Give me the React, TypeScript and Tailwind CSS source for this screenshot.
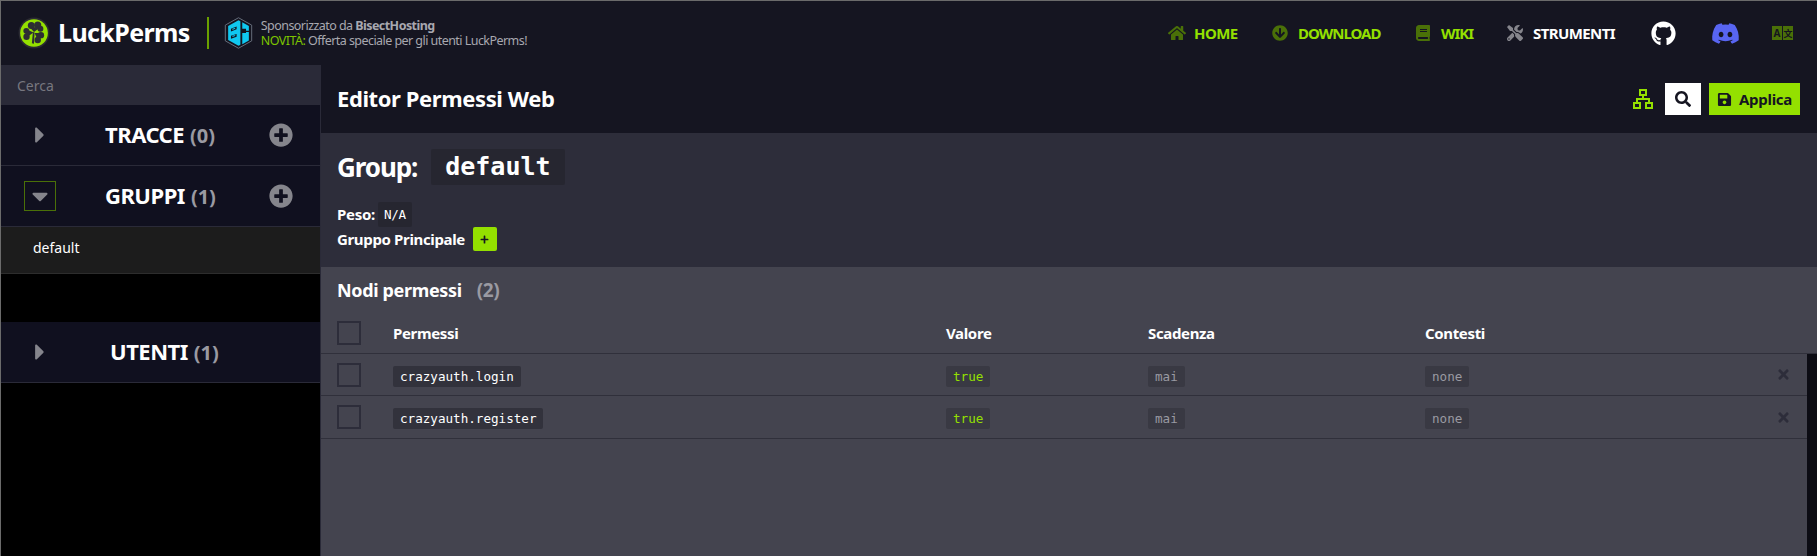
import { FaHome, FaArrowCircleDown, FaBook, FaTools, FaGithub, FaDiscord, FaSearch, FaSave, FaPlusCircle, FaCaretRight, FaCaretDown, FaTimes, FaPlus } from "react-icons/fa";

const sans = "font-['Noto_Sans','Open_Sans',sans-serif]";
const mono = "font-['DejaVu_Sans_Mono','Liberation_Mono',monospace]";

function Clover() {
  return (
    <svg width="32" height="32" viewBox="0 0 30 30" aria-hidden="true">
      <circle cx="15" cy="15" r="14.500" fill="#2b2b33" />
      <circle cx="15" cy="15" r="13" fill="#94e000" />
      <g fill="#2d2d33">
        <circle cx="12.500" cy="8" r="3.300" />
        <circle cx="18.500" cy="7.500" r="3.300" />
        <circle cx="21" cy="11" r="2.800" />
        <path d="M15 14 11 9.500 21 9.500Z" />
        <circle cx="7.800" cy="13" r="2.800" />
        <circle cx="8" cy="18.500" r="3" />
        <path d="M14.500 14.500 7 11 7 20Z" />
        <circle cx="21.500" cy="17" r="3" />
        <circle cx="18.500" cy="21.500" r="3" />
        <path d="M15.500 15 23 15 19.500 24Z" />
        <path d="M14 14 15.500 14.500 15 25 13 24.500Z" />
      </g>
    </svg>
  );
}

function BisectLogo() {
  return (
    <svg width="29" height="32" viewBox="0 0 30 34" aria-hidden="true">
      <path d="M15 .8 29 8.600v16.800L15 33.200 1 25.400V8.600Z" fill="#14141f" stroke="#6b7280" strokeWidth="1" />
      <path d="M4 9.500 15 3.500l2 1v25l-2 1-11-6Z" fill="#10c8f0" />
      <path d="M19 5.500 26 9.500v5h-3v-2h-4Z M19 17h4v-1h3v9l-7 4Z" fill="#10c8f0" />
      <path d="M7 12.500 13 10v3l-6 2.500Z M7 20 13 18v3l-6 2Z" fill="#14141f" />
      <path d="M8.500 12.500 11.500 11.300v1.200l-3 1.200Z M8.500 20 11.500 19v1.200l-3 1Z" fill="#10c8f0" />
    </svg>
  );
}

function NetworkIcon() {
  return (
    <svg width="20" height="20" viewBox="0 0 20 20" fill="none" stroke="#94e000" strokeWidth="2" aria-hidden="true">
      <rect x="7" y="1" width="6" height="5" />
      <rect x="1" y="14" width="6" height="5" />
      <rect x="13" y="14" width="6" height="5" />
      <path d="M10 6v4M4 14v-4h12v4" />
    </svg>
  );
}

function TranslateIcon() {
  return (
    <div className={`flex gap-px text-[10px] font-bold leading-none text-[#14141f] ${sans}`}>
      <span className="flex h-[14px] w-[10px] items-center justify-center bg-[#4a7008]">A</span>
      <span className="flex h-[14px] w-[10px] items-center justify-center bg-[#4a7008] font-['Noto_Sans_CJK_SC',sans-serif] text-[9px]">文</span>
    </div>
  );
}

function NavItem({ icon, label, white, tight, width }: { icon: React.ReactNode; label: string; white?: boolean; tight?: boolean; width: string }) {
  return (
    <div className={`flex items-center ${width}`}>
      <span className="flex w-[26px] shrink-0 items-center">{icon}</span>
      <span className={`text-[15px] font-bold ${tight ? "tracking-[-1px]" : "tracking-[-0.6px]"} ${white ? "text-white" : "text-[#94e000]"}`}>{label}</span>
    </div>
  );
}

function SideRow({ label, count, open, add, pl }: { label: string; count: number; open?: boolean; add?: boolean; pl: string }) {
  return (
    <div className="flex h-[61px] shrink-0 items-center border-b border-[#2a2a38] bg-[#10101f]">
      <div className="flex w-[23px] shrink-0" />
      <div className={`flex h-[30px] w-[32px] shrink-0 items-center justify-center text-[#85858c] ${open ? "border border-[#4a7008]" : ""}`}>
        {open ? <FaCaretDown size={26} /> : <FaCaretRight size={26} />}
      </div>
      <div className={`flex-1 whitespace-nowrap pb-[2px] ${pl}`}>
        <span className="text-[22px] font-bold tracking-[-0.5px] text-white">{label}</span>
        <span className="ml-[6px] text-[20px] font-bold text-[#9a9aa2]">({count})</span>
      </div>
      {add && (
        <div className="mr-[27px] text-[#85858c]">
          <FaPlusCircle size={24} />
        </div>
      )}
    </div>
  );
}

function Checkbox() {
  return <div className="h-[24px] w-[24px] shrink-0 border-2 border-[#2d2d3a]" />;
}

function Chip({ children, color }: { children: React.ReactNode; color: string }) {
  return <span className={`rounded-[2px] bg-[#393943] px-[7px] py-[3px] text-[12.6px] leading-[18px] ${mono} ${color}`}>{children}</span>;
}

function PermRow({ name, height }: { name: string; height: string }) {
  return (
    <div className={`flex items-center border-b border-[#30303b] pl-[16px] pr-[10px] ${height}`}>
      <Checkbox />
      <div className="ml-[32px] w-[553px] shrink-0">
        <span className={`rounded-[2px] bg-[#32323c] px-[7px] py-[3px] text-[12.6px] leading-[18px] text-white ${mono}`}>{name}</span>
      </div>
      <div className="w-[202px] shrink-0"><Chip color="text-[#94e000]">true</Chip></div>
      <div className="w-[277px] shrink-0"><Chip color="text-[#9a9aa2]">mai</Chip></div>
      <div className="flex-1"><Chip color="text-[#9a9aa2]">none</Chip></div>
      <div className="mr-[16px] text-[#2d2d3a]"><FaTimes size={15} /></div>
    </div>
  );
}

export default function App() {
  return (
    <div className={`flex h-[556px] w-[1817px] flex-col overflow-hidden border-l border-t border-[#6b6b6b] bg-black ${sans}`}>
      <header className="flex h-[64px] shrink-0 items-center bg-[#151521] pl-[17px]">
        <Clover />
        <span className="ml-[8px] text-[25px] font-bold tracking-[-0.6px] text-white">LuckPerms</span>
        <div className="ml-[17px] h-[32px] w-[2px] bg-[#6aa000]" />
        <div className="ml-[15px]"><BisectLogo /></div>
        <div className="ml-[8px] text-[12.5px] leading-[15px] tracking-[-0.55px] text-[#a8a8b0]">
          <div>Sponsorizzato da <b>BisectHosting</b></div>
          <div><span className="text-[#7cc400]">NOVITÀ:</span> Offerta speciale per gli utenti LuckPerms!</div>
        </div>
        <nav className="ml-auto flex items-center pr-[24px]">
          <NavItem width="w-[104px]" label="HOME" icon={<FaHome size={18} className="text-[#4a7008]" />} />
          <NavItem width="w-[143px]" tight label="DOWNLOAD" icon={<FaArrowCircleDown size={16} className="text-[#4a7008]" />} />
          <NavItem width="w-[92px]" tight label="WIKI" icon={<FaBook size={16} className="text-[#4a7008]" />} />
          <NavItem width="w-[144px]" white label="STRUMENTI" icon={<FaTools size={16} className="text-[#85858c]" />} />
          <div className="w-[60px] text-white"><FaGithub size={25} /></div>
          <div className="w-[61px] text-[#5865f2]"><FaDiscord size={29} /></div>
          <TranslateIcon />
        </nav>
      </header>

      <div className="flex min-h-0 flex-1">
        <aside className="flex w-[320px] shrink-0 flex-col border-r border-[#2a2a38]">
          <div className="flex h-[40px] shrink-0 items-center bg-[#2a2a38] pl-[16px] text-[14px] text-[#77777f]">Cerca</div>
          <SideRow label="TRACCE" count={0} add pl="pl-[49px]" />
          <SideRow label="GRUPPI" count={1} open add pl="pl-[49px]" />
          <div className="flex h-[47px] shrink-0 items-center border-b border-[#2d2d2d] bg-[#1c1c1c] pb-[6px] pl-[32px] text-[14px] text-white">default</div>
          <div className="h-[48px] shrink-0" />
          <SideRow label="UTENTI" count={1} pl="pl-[54px]" />
        </aside>

        <main className="flex min-w-0 flex-1 flex-col">
          <div className="flex h-[68px] shrink-0 items-center bg-[#151521] pl-[16px] pr-[17px]">
            <h1 className="pb-[2px] text-[22px] font-bold tracking-[-0.4px] text-white">Editor Permessi Web</h1>
            <div className="ml-auto flex items-center">
              <NetworkIcon />
              <div className="ml-[12px] flex h-[32px] w-[36px] items-center justify-center bg-white text-[#151521]"><FaSearch size={16} /></div>
              <div className="ml-[8px] flex h-[32px] w-[91px] items-center justify-center gap-[7px] bg-[#94e000] text-[15px] font-bold tracking-[-0.3px] text-[#151521]"><FaSave size={15} />Applica</div>
            </div>
          </div>

          <section className="h-[134px] shrink-0 bg-[#2d2d3a] pl-[16px] pt-[16px]">
            <div className="flex items-center">
              <span className="text-[26px] font-bold leading-[36px] tracking-[-1.1px] text-white">Group:</span>
              <span className={`ml-[14px] rounded-[2px] bg-[#262630] px-[14px] text-[25px] font-bold leading-[36px] text-white ${mono}`}>default</span>
            </div>
            <div className="mt-[17px] flex h-[25px] items-center text-[15px] font-bold tracking-[-0.3px] text-white">
              Peso:
              <span className={`ml-[3px] rounded-[2px] bg-[#262630] px-[6px] text-[12.6px] font-normal leading-[25px] ${mono}`}>N/A</span>
            </div>
            <div className="flex h-[24px] items-center text-[15px] font-bold tracking-[-0.35px] text-white">
              Gruppo Principale
              <span className="ml-[8px] flex h-[24px] w-[24px] items-center justify-center rounded-[2px] bg-[#94e000] text-[#151521]"><FaPlus size={9} /></span>
            </div>
          </section>

          <section className="relative min-h-0 flex-1 bg-[#44444f]">
            <div className="flex h-[46px] items-center pl-[16px] text-[18px] font-bold tracking-[-0.35px] text-white">
              Nodi permessi
              <span className="ml-[15px] text-[19px] text-[#9a9aa2]">(2)</span>
            </div>
            <div className="flex h-[41px] items-center border-b border-[#30303b] pl-[16px] text-[15px] font-bold tracking-[-0.35px] text-white">
              <Checkbox />
              <div className="ml-[32px] w-[553px] shrink-0">Permessi</div>
              <div className="w-[202px] shrink-0">Valore</div>
              <div className="w-[277px] shrink-0">Scadenza</div>
              <div>Contesti</div>
            </div>
            <PermRow name="crazyauth.login" height="h-[42px]" />
            <PermRow name="crazyauth.register" height="h-[43px]" />
            <div className="absolute bottom-0 right-0 top-[87px] w-[10px] bg-[#0c0c14]" />
          </section>
        </main>
      </div>
    </div>
  );
}
